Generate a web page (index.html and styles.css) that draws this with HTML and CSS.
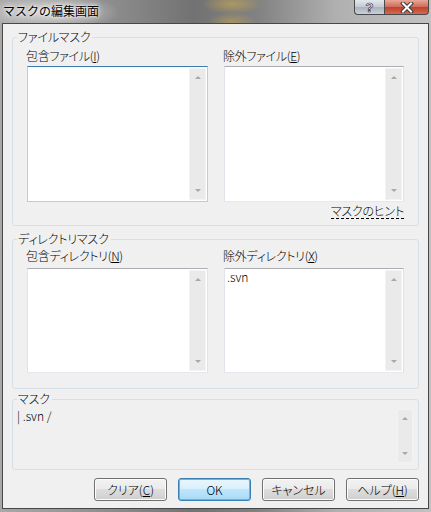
FILE: index.html
```html
<!DOCTYPE html>
<html lang="ja">
<head>
  <meta charset="UTF-8">
  <title>マスクの編集画面</title>
  <link rel="stylesheet" href="styles.css">
</head>
<body>

<div class="window">
  <div class="titlebar">
    <span class="title">マスクの編集画面</span>
    <div class="caption">
      <span class="cap cap-help">?</span>
      <span class="cap cap-close">
        <svg width="14" height="11" viewBox="0 0 14 11">
          <path d="M3 1.5 L11 9.5 M11 1.5 L3 9.5" stroke="#3b3b3b" stroke-width="4" stroke-linecap="square"/>
          <path d="M3 1.5 L11 9.5 M11 1.5 L3 9.5" stroke="#fff" stroke-width="2" stroke-linecap="square"/>
        </svg>
      </span>
    </div>
  </div>

  <div class="client">

    <!-- ファイル -->
    <fieldset class="group group-files">
      <legend>ファイルマスク</legend>
      <div class="cols">
        <div class="col">
          <div class="label">包含ファイル(<u>I</u>)</div>
          <div class="listbox focused">
            <div class="items"></div>
            <div class="vscroll"><span class="arrow up"></span><span class="arrow down"></span></div>
          </div>
        </div>
        <div class="col">
          <div class="label">除外ファイル(<u>E</u>)</div>
          <div class="listbox">
            <div class="items"></div>
            <div class="vscroll"><span class="arrow up"></span><span class="arrow down"></span></div>
          </div>
        </div>
      </div>
      <div class="hint-row"><span class="hint">マスクのヒント</span></div>
    </fieldset>

    <!-- ディレクトリ -->
    <fieldset class="group group-dirs">
      <legend>ディレクトリマスク</legend>
      <div class="cols">
        <div class="col">
          <div class="label">包含ディレクトリ(<u>N</u>)</div>
          <div class="listbox">
            <div class="items"></div>
            <div class="vscroll"><span class="arrow up"></span><span class="arrow down"></span></div>
          </div>
        </div>
        <div class="col">
          <div class="label">除外ディレクトリ(<u>X</u>)</div>
          <div class="listbox">
            <div class="items"><div class="item">.svn</div></div>
            <div class="vscroll"><span class="arrow up"></span><span class="arrow down"></span></div>
          </div>
        </div>
      </div>
    </fieldset>

    <!-- マスク -->
    <fieldset class="group group-mask">
      <legend>マスク</legend>
      <div class="mask-body">
        <div class="mask-text">| .svn /</div>
        <div class="vscroll short"><span class="arrow up"></span><span class="arrow down"></span></div>
      </div>
    </fieldset>

    <div class="buttons">
      <button class="btn">クリア(<u>C</u>)</button>
      <button class="btn btn-default">OK</button>
      <button class="btn">キャンセル</button>
      <button class="btn">ヘルプ(<u>H</u>)</button>
    </div>

  </div>
</div>

</body>
</html>
```

FILE: styles.css
```css
body {
  margin: 0;
  font-family: "Noto Sans CJK JP", "Liberation Sans", sans-serif;
  font-size: 12px;
  font-weight: 300;
  color: #000;
}

.window {
  width: 431px;
  height: 512px;
  box-sizing: border-box;
  padding: 0 2px 3px 2px;
  display: flex;
  flex-direction: column;
  background:
    radial-gradient(ellipse 30px 10px at 232px 4px, rgba(214, 176, 70, 0.55), transparent),
    radial-gradient(ellipse 24px 10px at 232px 22px, rgba(214, 176, 70, 0.45), transparent),
    radial-gradient(ellipse 70px 18px at 50px 12px, rgba(255, 255, 255, 0.6), transparent),
    linear-gradient(to right, #a8a8a8 0%, #8e8e8e 25%, #727272 45%, #828282 60%, #b0b0b0 78%, #c2c2c2 100%);
}

/* タイトルバー */
.titlebar {
  height: 23px;
  display: flex;
  justify-content: space-between;
  align-items: flex-start;
}

.title {
  margin: 4px 0 0 1px;
  font-size: 12px;
  font-weight: 400;
  line-height: 14px;
  color: #000;
  text-shadow: 0 0 6px #fff, 0 0 3px #fff;
}

.caption {
  display: flex;
}

.cap {
  height: 15px;
  box-sizing: border-box;
  border: 1px solid #4a4a4a;
  border-top: none;
  display: flex;
  align-items: center;
  justify-content: center;
}

.cap-help {
  width: 30px;
  border-radius: 0 0 0 4px;
  border-right: none;
  background: linear-gradient(#e4e8ee, #c4cad2 50%, #aab2bc 51%, #c8d0da);
  color: #fff;
  font-family: "Liberation Sans", sans-serif;
  font-weight: bold;
  font-size: 13px;
  -webkit-text-stroke: 0.7px #3b3b3b;
}

.cap-close {
  width: 45px;
  border-radius: 0 0 4px 0;
  background: linear-gradient(#e8a898, #d06a58 50%, #c0402c 51%, #d46a50);
}

/* クライアント領域 */
.client {
  flex: 1;
  background: #f0f0f0;
  border: 1px solid #474747;
  display: flex;
  flex-direction: column;
}

.group {
  margin: 0 9px;
  padding: 0;
  min-inline-size: 0;
  border: 1px solid #d5dfe5;
  border-radius: 3px;
}

.group legend {
  margin-left: 4px;
  padding: 0 2px 0 1px;
  line-height: 14px;
  font-feature-settings: "palt";
  letter-spacing: -0.2px;
}

.group-files {
  margin-top: 6px;
  padding: 5px 0 6px;
}

.group-dirs {
  margin-top: 6px;
  padding: 3px 0 15px;
}

.group-mask {
  margin-top: 3px;
}

.cols {
  display: grid;
  grid-template-columns: 181px 180px;
  column-gap: 16px;
  padding: 0 14px;
}

.label {
  margin-left: -1px;
  line-height: 14px;
  margin-bottom: 3px;
  font-feature-settings: "palt";
  letter-spacing: -0.3px;
}

.group-dirs .label {
  margin-bottom: 5px;
}

.listbox {
  display: flex;
  background: #fff;
  border: 1px solid #e2e3ea;
  border-top-color: #abadb3;
  border-bottom-color: #e3e9ef;
  height: 136px;
  box-sizing: border-box;
}

.group-dirs .listbox {
  height: 105px;
}

.listbox.focused {
  border-color: #b5cfe7;
  border-top-color: #3d7bad;
}

.items {
  flex: 1;
  padding: 1px 2px;
}

.item {
  line-height: 14px;
}

.vscroll {
  width: 17px;
  margin: 1px;
  box-sizing: border-box;
  background: #eaeaea;
  border: 1px solid #f3f3f3;
  display: flex;
  flex-direction: column;
  justify-content: space-between;
  align-items: center;
  padding: 7px 0;
}

.arrow {
  width: 0;
  height: 0;
  border-left: 3px solid transparent;
  border-right: 3px solid transparent;
}

.arrow.up {
  border-bottom: 3px solid #a8a8a8;
}

.arrow.down {
  border-top: 3px solid #a8a8a8;
}

.hint-row {
  padding: 0 14px;
  text-align: right;
}

.hint {
  display: inline-block;
  line-height: 15px;
  border-bottom: 1px dashed #000;
  font-feature-settings: "palt";
  letter-spacing: -0.2px;
}

/* マスク */
.mask-body {
  display: flex;
  padding: 3px 5px 6px 4px;
}

.mask-text {
  flex: 1;
  line-height: 14px;
}

.vscroll.short {
  width: 16px;
  height: 54px;
  margin: 0;
}

/* ボタン */
.buttons {
  display: flex;
  justify-content: flex-end;
  gap: 11px;
  margin-top: 8px;
  padding-right: 9px;
}

.btn {
  width: 73px;
  height: 23px;
  padding: 0;
  font-family: inherit;
  font-size: 12px;
  font-weight: 300;
  font-feature-settings: "palt";
  color: #000;
  border: 1px solid #707070;
  border-radius: 3px;
  background: linear-gradient(#f2f2f2, #ebebeb 45%, #dddddd 50%, #cfcfcf);
  box-shadow: inset 0 0 0 1px #fcfcfc;
}

.btn-default {
  border-color: #3c7fb1;
  background: linear-gradient(#eaf6fd, #d9f0fc 45%, #bee6fd 50%, #a7d9f5);
  box-shadow: inset 0 0 0 1px #48c2f0;
}
```
